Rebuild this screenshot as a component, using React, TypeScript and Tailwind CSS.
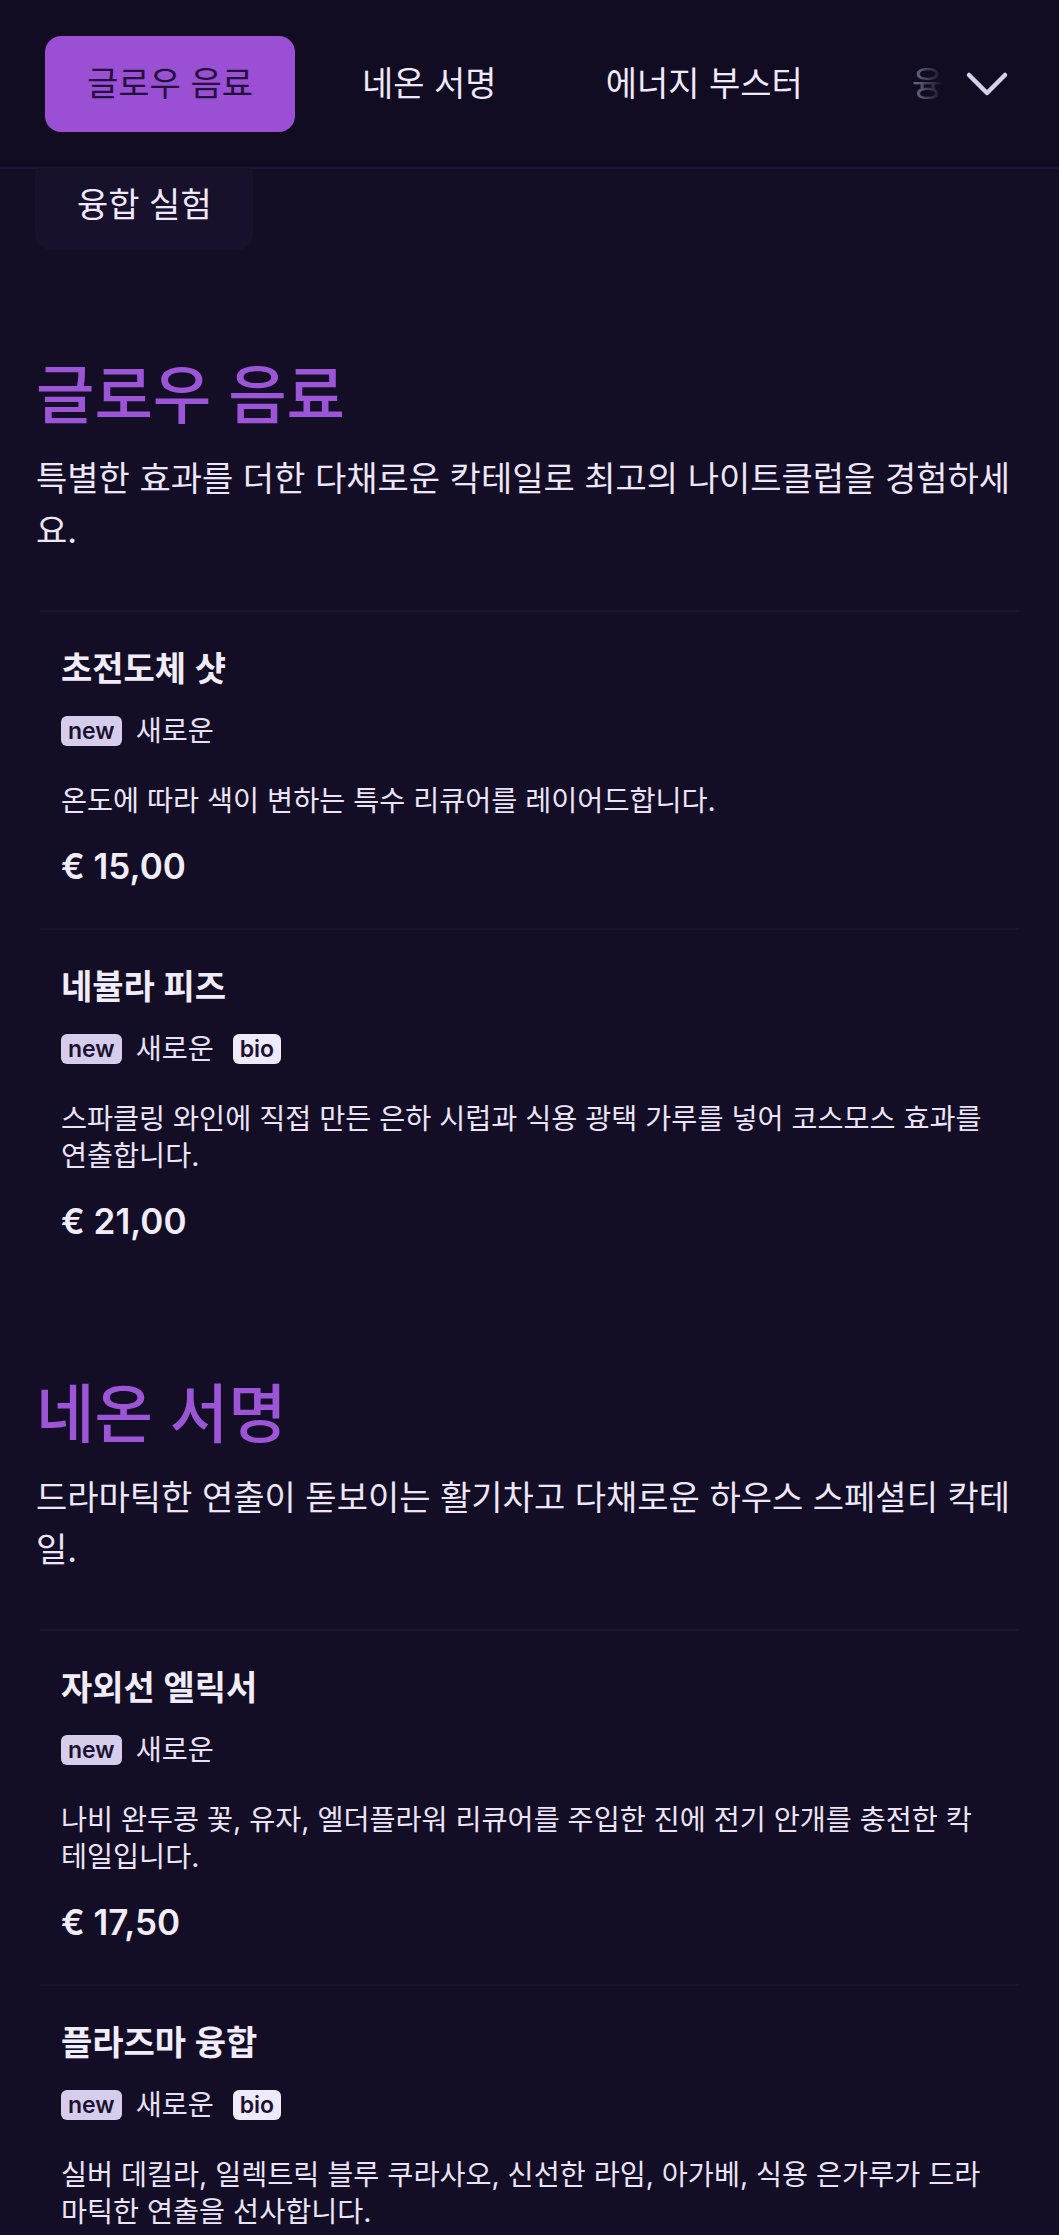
import React from "react";

type Item = {
  title: string;
  bio?: boolean;
  desc: string;
  price: string;
};

type Section = {
  title: string;
  desc: string;
  items: Item[];
};

const sections: Section[] = [
  {
    title: "글로우 음료",
    desc: "특별한 효과를 더한 다채로운 칵테일로 최고의 나이트클럽을 경험하세요.",
    items: [
      {
        title: "초전도체 샷",
        desc: "온도에 따라 색이 변하는 특수 리큐어를 레이어드합니다.",
        price: "€ 15,00",
      },
      {
        title: "네뷸라 피즈",
        bio: true,
        desc: "스파클링 와인에 직접 만든 은하 시럽과 식용 광택 가루를 넣어 코스모스 효과를 연출합니다.",
        price: "€ 21,00",
      },
    ],
  },
  {
    title: "네온 서명",
    desc: "드라마틱한 연출이 돋보이는 활기차고 다채로운 하우스 스페셜티 칵테일.",
    items: [
      {
        title: "자외선 엘릭서",
        desc: "나비 완두콩 꽃, 유자, 엘더플라워 리큐어를 주입한 진에 전기 안개를 충전한 칵테일입니다.",
        price: "€ 17,50",
      },
      {
        title: "플라즈마 융합",
        bio: true,
        desc: "실버 데킬라, 일렉트릭 블루 쿠라사오, 신선한 라임, 아가베, 식용 은가루가 드라마틱한 연출을 선사합니다.",
        price: "€ 19,00",
      },
    ],
  },
];

const navItems = ["글로우 음료", "네온 서명", "에너지 부스터", "융합 실험"];

function MenuItem({ item }: { item: Item }) {
  return (
    <div className="mx-[4px] border-t-2 border-[#1b1531] pt-[37px] pr-[30px] pb-[42px] pl-[21px]">
      <div className="text-[34px] leading-[40px] font-semibold text-[#f1ecfa]">{item.title}</div>
      <div className="mt-[27px] flex h-[30px] items-center gap-[14px]">
        <span className="flex h-[30px] items-center rounded-[6px] bg-[#d6cdec] px-[7px] text-[23px] leading-none font-semibold text-[#1b1230]">
          new
        </span>
        <span className="text-[28.3px] leading-none text-[#e8e1f5]">새로운</span>
        {item.bio && (
          <span className="ml-[5px] flex h-[30px] items-center rounded-[6px] bg-[#efe9fc] px-[7px] text-[23px] leading-none font-semibold text-[#1b1230]">
            bio
          </span>
        )}
      </div>
      <p className="mt-[37px] text-[28.3px] leading-[37px] text-[#ebe4f7]">{item.desc}</p>
      <div className="mt-[26px] text-[35px] leading-[40px] font-semibold text-[#f1ecfa]">{item.price}</div>
    </div>
  );
}

export default function App() {
  return (
    <div className="min-h-screen bg-[#130e25] font-[family-name:Inter,'Noto_Sans_CJK_KR',sans-serif] text-[#ece6f7]">
      <header className="relative h-[169px] border-b-2 border-[#1c1533] bg-[#120c22]">
        <nav className="flex h-full items-center gap-[25px] overflow-hidden pl-[45px]">
          {navItems.map((label, i) => (
            <div
              key={label}
              className={
                i === 0
                  ? "flex h-[96px] shrink-0 items-center rounded-[16px] bg-[#9a4fd4] px-[42px] text-[34px] whitespace-nowrap text-[#22113b]"
                  : "flex h-[96px] shrink-0 items-center rounded-[16px] px-[42px] text-[34px] whitespace-nowrap text-[#efe9fb]"
              }
            >
              {label}
            </div>
          ))}
        </nav>
        <div className="absolute top-0 right-0 h-full w-[239px] bg-[linear-gradient(to_right,rgba(18,12,34,0)_0%,rgba(18,12,34,0.6)_40%,#120c22_52%)]" />
        <button className="absolute top-[60px] right-[48px] flex h-[48px] w-[48px] items-center justify-center">
          <svg width="44" height="28" viewBox="0 0 44 28" fill="none">
            <polyline
              points="4,5 22,23 40,5"
              stroke="#d9cff0"
              strokeWidth="4.5"
              strokeLinecap="round"
              strokeLinejoin="round"
            />
          </svg>
        </button>
        <div className="absolute top-[168px] left-[35px] z-10 flex h-[82px] w-[218px] items-center rounded-b-[16px] rounded-t-[6px] bg-[#17112b] pb-[10px] pl-[42px] text-[34px] whitespace-nowrap text-[#efe9fb]">
          융합 실험
        </div>
      </header>

      <main className="px-9 pt-[190px]">
        {sections.map((s, idx) => (
          <section key={s.title} className={idx > 0 ? "mt-[95px]" : ""}>
            <h2 className="text-[63.5px] leading-[72px] font-medium text-[#9b55d6]">{s.title}</h2>
            <p className="mt-[22px] text-[34px] leading-[52px] text-[#ece6f7]">{s.desc}</p>
            <div className="mt-[53px]">
              {s.items.map((it) => (
                <MenuItem key={it.title} item={it} />
              ))}
            </div>
          </section>
        ))}
      </main>
    </div>
  );
}
